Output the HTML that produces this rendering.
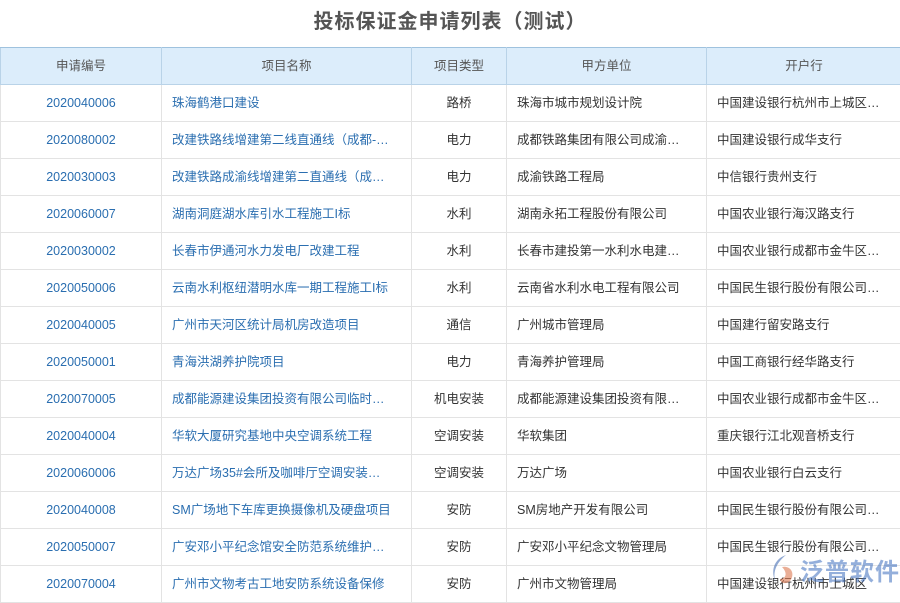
<!DOCTYPE html>
<html><head><meta charset="utf-8"><style>
body{margin:0;width:900px;height:600px;overflow:hidden;background:#fff;font-family:"Liberation Sans","Noto Sans CJK SC",sans-serif;position:relative}
h1{margin:0;height:47px;line-height:45px;text-align:center;font-size:20px;color:#555;font-weight:bold;letter-spacing:1px}
table{border-collapse:collapse;position:absolute;top:47px;left:0;width:901px;table-layout:fixed;font-size:12.5px}
tr{height:37px}
th{background:#dcedfb;color:#555;font-weight:normal;height:35px;line-height:16px;padding:0;border:1px solid #b9d3e8;border-top:1.5px solid #9fc2de}
td{height:36px;line-height:16px;padding:0 10px;border:1px solid #e3e3e3;color:#333;white-space:nowrap;overflow:hidden;text-overflow:ellipsis;vertical-align:middle}
td.c{text-align:center;padding:0}
td.b{color:#2a6eb0}
.wm{position:absolute;left:800px;top:552px;font-size:24px;color:rgba(60,110,190,.55);font-weight:bold;letter-spacing:1px;white-space:nowrap}
</style></head><body>
<h1>投标保证金申请列表（测试）</h1>
<table>
<colgroup><col style="width:161px"><col style="width:250px"><col style="width:95px"><col style="width:200px"><col style="width:195px"></colgroup>
<tr style="height:37px"><th>申请编号</th><th>项目名称</th><th>项目类型</th><th>甲方单位</th><th>开户行</th></tr>
<tr><td class="c b">2020040006</td><td class="b">珠海鹤港口建设</td><td class="c">路桥</td><td>珠海市城市规划设计院</td><td>中国建设银行杭州市上城区…</td></tr>
<tr><td class="c b">2020080002</td><td class="b">改建铁路线增建第二线直通线（成都-…</td><td class="c">电力</td><td>成都铁路集团有限公司成渝…</td><td>中国建设银行成华支行</td></tr>
<tr><td class="c b">2020030003</td><td class="b">改建铁路成渝线增建第二直通线（成…</td><td class="c">电力</td><td>成渝铁路工程局</td><td>中信银行贵州支行</td></tr>
<tr><td class="c b">2020060007</td><td class="b">湖南洞庭湖水库引水工程施工I标</td><td class="c">水利</td><td>湖南永拓工程股份有限公司</td><td>中国农业银行海汉路支行</td></tr>
<tr><td class="c b">2020030002</td><td class="b">长春市伊通河水力发电厂改建工程</td><td class="c">水利</td><td>长春市建投第一水利水电建…</td><td>中国农业银行成都市金牛区…</td></tr>
<tr><td class="c b">2020050006</td><td class="b">云南水利枢纽潜明水库一期工程施工I标</td><td class="c">水利</td><td>云南省水利水电工程有限公司</td><td>中国民生银行股份有限公司…</td></tr>
<tr><td class="c b">2020040005</td><td class="b">广州市天河区统计局机房改造项目</td><td class="c">通信</td><td>广州城市管理局</td><td>中国建行留安路支行</td></tr>
<tr><td class="c b">2020050001</td><td class="b">青海洪湖养护院项目</td><td class="c">电力</td><td>青海养护管理局</td><td>中国工商银行经华路支行</td></tr>
<tr><td class="c b">2020070005</td><td class="b">成都能源建设集团投资有限公司临时…</td><td class="c">机电安装</td><td>成都能源建设集团投资有限…</td><td>中国农业银行成都市金牛区…</td></tr>
<tr><td class="c b">2020040004</td><td class="b">华软大厦研究基地中央空调系统工程</td><td class="c">空调安装</td><td>华软集团</td><td>重庆银行江北观音桥支行</td></tr>
<tr><td class="c b">2020060006</td><td class="b">万达广场35#会所及咖啡厅空调安装…</td><td class="c">空调安装</td><td>万达广场</td><td>中国农业银行白云支行</td></tr>
<tr><td class="c b">2020040008</td><td class="b">SM广场地下车库更换摄像机及硬盘项目</td><td class="c">安防</td><td>SM房地产开发有限公司</td><td>中国民生银行股份有限公司…</td></tr>
<tr><td class="c b">2020050007</td><td class="b">广安邓小平纪念馆安全防范系统维护…</td><td class="c">安防</td><td>广安邓小平纪念文物管理局</td><td>中国民生银行股份有限公司…</td></tr>
<tr><td class="c b">2020070004</td><td class="b">广州市文物考古工地安防系统设备保修</td><td class="c">安防</td><td>广州市文物管理局</td><td>中国建设银行杭州市上城区</td></tr>
</table>
<svg style="position:absolute;left:768px;top:553px" width="30" height="34" viewBox="0 0 30 34"><path d="M18 2 C6 6 2 18 8 30 C4 20 8 10 18 2Z" fill="rgba(70,110,180,.6)"/><path d="M14 14 C22 12 28 20 22 28 C18 32 12 30 12 26 C18 26 20 20 14 14Z" fill="rgba(220,120,80,.6)"/></svg>
<div class="wm">泛普软件</div>
</body></html>
